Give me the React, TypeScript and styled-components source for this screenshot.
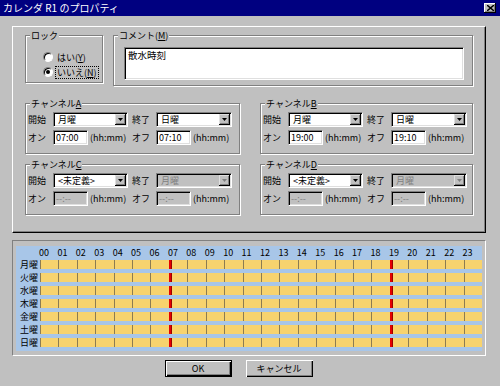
import React from 'react';
import styled, { createGlobalStyle } from 'styled-components';

const FONT = `"Noto Sans CJK JP", "Liberation Sans", sans-serif`;

const GlobalStyle = createGlobalStyle`
  html, body {
    margin: 0;
    padding: 0;
    background: #c0c0c0;
  }
  body {
    font-family: ${FONT};
    font-size: 9px;
    color: #000;
  }
  * {
    box-sizing: border-box;
  }
`;

const sunken = `
  border-top: 1px solid #808080;
  border-left: 1px solid #808080;
  border-right: 1px solid #fff;
  border-bottom: 1px solid #fff;
  box-shadow: inset 1px 1px #000, inset -1px -1px #dfdfdf;
`;

const Window = styled.div`
  width: 500px;
  height: 386px;
  background: #c0c0c0;
  display: flex;
  flex-direction: column;
  overflow: hidden;
`;

const TitleBar = styled.div`
  height: 16px;
  flex: none;
  background: #000080;
  color: #fff;
  display: flex;
  align-items: center;
  justify-content: space-between;
  padding: 0 4px 0 3px;
  font-size: 10px;
  line-height: 16px;
`;

const CloseButton = styled.span`
  width: 12px;
  height: 10px;
  background: #c0c0c0;
  box-shadow: inset -1px -1px #000, inset 1px 1px #fff, inset -2px -2px #808080;
  display: flex;
  align-items: center;
  justify-content: center;
`;

const Body = styled.div`
  padding: 10px 14px 0 12px;
  display: flex;
  flex-direction: column;
`;

const SettingsPanel = styled.div`
  height: 207px;
  border-top: 1px solid #fff;
  border-left: 1px solid #fff;
  border-right: 1px solid #000;
  border-bottom: 1px solid #000;
  box-shadow: inset -1px -1px #808080;
  padding: 3px 12px 0 12px;
`;

const TopRow = styled.div`
  display: flex;
  align-items: flex-start;
  gap: 10px;
`;

const Group = styled.fieldset<{ $width?: number }>`
  margin: 0;
  padding: 0;
  min-width: 0;
  border: 1px solid #808080;
  box-shadow: inset 1px 1px #fff, 1px 1px #fff;
  ${(p) => (p.$width ? `width: ${p.$width}px; flex: none;` : 'flex: 1;')}
`;

const Legend = styled.legend`
  margin-left: 4px;
  padding: 0 1px;
  height: 11px;
  line-height: 11px;
  background: #c0c0c0;
`;

const RadioList = styled.div`
  display: flex;
  flex-direction: column;
  gap: 3px;
  padding: 10px 0 4px 17px;
`;

const RadioRow = styled.label`
  display: flex;
  align-items: center;
  gap: 3px;
  height: 12px;
`;

const RadioCircle = styled.span<{ $checked?: boolean }>`
  width: 10px;
  height: 10px;
  flex: none;
  border-radius: 50%;
  background: #fff;
  border: 1px solid;
  border-color: #808080 #fff #fff #808080;
  box-shadow: inset 1px 1px #000;
  display: flex;
  align-items: center;
  justify-content: center;

  &::after {
    content: '';
    width: 4px;
    height: 4px;
    border-radius: 50%;
    background: #000;
    display: ${(p) => (p.$checked ? 'block' : 'none')};
  }
`;

const RadioText = styled.span<{ $focused?: boolean }>`
  line-height: 11px;
  padding: 0 1px;
  outline: ${(p) => (p.$focused ? '1px dotted #000' : 'none')};
`;

const CommentBody = styled.div`
  padding: 6px 8px 5px 10px;
`;

const CommentBox = styled.div`
  height: 33px;
  background: #fff;
  padding: 2px 3px;
  line-height: 11px;
  font-size: 9.5px;
  ${sunken}
`;

const ChannelGrid = styled.div`
  margin-top: 12px;
  display: grid;
  grid-template-columns: 215px 213px;
  column-gap: 20px;
  row-gap: 5px;
`;

const ChannelBody = styled.div`
  display: grid;
  grid-template-columns: 25px 75px 28px 76px;
  grid-template-rows: 15px 15px;
  row-gap: 3px;
  align-items: center;
  padding: 3px 0 8px 2px;
`;

const FieldLabel = styled.span<{ $gap?: boolean }>`
  line-height: 11px;
  white-space: nowrap;
  padding-left: ${(p) => (p.$gap ? '4px' : '0')};
`;

const Combo = styled.div<{ $disabled?: boolean }>`
  height: 15px;
  display: flex;
  align-items: stretch;
  padding: 1px;
  ${sunken}
  background: ${(p) => (p.$disabled ? '#c0c0c0' : '#fff')};
  color: ${(p) => (p.$disabled ? '#808080' : '#000')};
`;

const ComboText = styled.span`
  flex: 1;
  padding-left: 3px;
  line-height: 11px;
  white-space: nowrap;
  overflow: hidden;
`;

const ComboButton = styled.span`
  width: 11px;
  flex: none;
  background: #c0c0c0;
  box-shadow: inset -1px -1px #000, inset 1px 1px #dfdfdf, inset -2px -2px #808080;
  display: flex;
  align-items: center;
  justify-content: center;
`;

const TimeCell = styled.div`
  display: flex;
  align-items: center;
  gap: 2px;
`;

const TimeInput = styled.div<{ $disabled?: boolean }>`
  width: 35px;
  height: 15px;
  flex: none;
  padding: 1px 2px;
  line-height: 11px;
  ${sunken}
  background: ${(p) => (p.$disabled ? '#c0c0c0' : '#fff')};
  color: ${(p) => (p.$disabled ? '#808080' : '#000')};
`;

const Hint = styled.span`
  line-height: 11px;
  white-space: nowrap;
`;

const TimelinePanel = styled.div`
  margin-top: 7px;
  height: 116px;
  border-top: 1px solid #808080;
  border-left: 1px solid #808080;
  border-right: 1px solid #fff;
  border-bottom: 1px solid #fff;
  padding: 5px 3px 0 3px;
`;

const Timeline = styled.div`
  background: #a8c6e8;
  display: grid;
  grid-template-columns: 24px repeat(24, 1fr);
`;

const Corner = styled.div`
  height: 14px;
`;

const HourLabel = styled.div`
  height: 14px;
  line-height: 14px;
  margin-left: -1px;
`;

const DayLabel = styled.div`
  height: 9px;
  line-height: 9px;
  margin-bottom: 4px;
  text-align: right;
  padding-right: 2px;
  white-space: nowrap;
`;

const Track = styled.div`
  grid-column: 2 / -1;
  height: 9px;
  margin-bottom: 4px;
  position: relative;
  display: grid;
  grid-template-columns: repeat(24, 1fr);
  background: #f7d36e;
`;

const HourCell = styled.div`
  border-left: 1px solid #8c7c52;

  &:last-child {
    border-right: 1px solid #8c7c52;
  }
`;

const Marker = styled.div`
  position: absolute;
  top: 0;
  bottom: 0;
  background: #e40000;
  border-right: 1px solid #900;
`;

const ButtonRow = styled.div`
  margin-top: 4px;
  display: flex;
  justify-content: center;
  gap: 14px;
  padding-right: 21px;
`;

const Button = styled.button<{ $default?: boolean }>`
  width: 67px;
  height: 17px;
  padding: 0;
  font-family: ${FONT};
  font-size: 9px;
  line-height: 11px;
  color: #000;
  background: #c0c0c0;
  border: ${(p) => (p.$default ? '1px solid #000' : 'none')};
  box-shadow: ${(p) =>
    p.$default
      ? 'inset 1px 1px #fff, inset -1px -1px #000, inset -2px -2px #808080'
      : 'inset 1px 1px #fff, inset -1px -1px #000, inset -2px -2px #808080'};
`;

const Arrow = ({ disabled }: { disabled?: boolean }) => (
  <svg width="5" height="3" viewBox="0 0 5 3">
    <polygon points="0,0 5,0 2.5,3" fill={disabled ? '#808080' : '#000'} />
  </svg>
);

interface Channel {
  id: string;
  start: string;
  end: string;
  on: string;
  off: string;
  enabled: boolean;
}

const channels: Channel[] = [
  { id: 'A', start: '月曜', end: '日曜', on: '07:00', off: '07:10', enabled: true },
  { id: 'B', start: '月曜', end: '日曜', on: '19:00', off: '19:10', enabled: true },
  { id: 'C', start: '<未定義>', end: '月曜', on: '--:--', off: '--:--', enabled: false },
  { id: 'D', start: '<未定義>', end: '月曜', on: '--:--', off: '--:--', enabled: false },
];

const days = ['月曜', '火曜', '水曜', '木曜', '金曜', '土曜', '日曜'];
const hours = Array.from({ length: 24 }, (_, i) => String(i).padStart(2, '0'));

const toMinutes = (t: string) => {
  const [h, m] = t.split(':').map(Number);
  return h * 60 + m;
};

function ChannelGroup({ ch }: { ch: Channel }) {
  const off = !ch.enabled;
  return (
    <Group>
      <Legend>
        チャンネル<u>{ch.id}</u>
      </Legend>
      <ChannelBody>
        <FieldLabel>開始</FieldLabel>
        <Combo>
          <ComboText>{ch.start}</ComboText>
          <ComboButton>
            <Arrow />
          </ComboButton>
        </Combo>
        <FieldLabel $gap>終了</FieldLabel>
        <Combo $disabled={off}>
          <ComboText>{ch.end}</ComboText>
          <ComboButton>
            <Arrow disabled={off} />
          </ComboButton>
        </Combo>
        <FieldLabel>オン</FieldLabel>
        <TimeCell>
          <TimeInput $disabled={off}>{ch.on}</TimeInput>
          <Hint>(hh:mm)</Hint>
        </TimeCell>
        <FieldLabel $gap>オフ</FieldLabel>
        <TimeCell>
          <TimeInput $disabled={off}>{ch.off}</TimeInput>
          <Hint>(hh:mm)</Hint>
        </TimeCell>
      </ChannelBody>
    </Group>
  );
}

export default function App() {
  const active = channels.filter((c) => c.enabled);
  return (
    <Window>
      <GlobalStyle />
      <TitleBar>
        <span>カレンダ R1 のプロパティ</span>
        <CloseButton>
          <svg width="7" height="6" viewBox="0 0 7 6">
            <path d="M0 0 L7 6 M7 0 L0 6" stroke="#000" strokeWidth="1.4" />
          </svg>
        </CloseButton>
      </TitleBar>
      <Body>
        <SettingsPanel>
          <TopRow>
            <Group $width={78}>
              <Legend>ロック</Legend>
              <RadioList>
                <RadioRow>
                  <RadioCircle />
                  <RadioText>
                    はい(<u>Y</u>)
                  </RadioText>
                </RadioRow>
                <RadioRow>
                  <RadioCircle $checked />
                  <RadioText $focused>
                    いいえ(<u>N</u>)
                  </RadioText>
                </RadioRow>
              </RadioList>
            </Group>
            <Group>
              <Legend>
                コメント(<u>M</u>)
              </Legend>
              <CommentBody>
                <CommentBox>散水時刻</CommentBox>
              </CommentBody>
            </Group>
          </TopRow>
          <ChannelGrid>
            {channels.map((ch) => (
              <ChannelGroup key={ch.id} ch={ch} />
            ))}
          </ChannelGrid>
        </SettingsPanel>
        <TimelinePanel>
          <Timeline>
            <Corner />
            {hours.map((h) => (
              <HourLabel key={h}>{h}</HourLabel>
            ))}
            {days.map((d) => (
              <React.Fragment key={d}>
                <DayLabel>{d}</DayLabel>
                <Track>
                  {hours.map((h) => (
                    <HourCell key={h} />
                  ))}
                  {active.map((c) => {
                    const s = toMinutes(c.on);
                    const e = toMinutes(c.off);
                    return (
                      <Marker
                        key={c.id}
                        style={{ left: `${(s / 1440) * 100}%`, width: `${((e - s) / 1440) * 100}%` }}
                      />
                    );
                  })}
                </Track>
              </React.Fragment>
            ))}
          </Timeline>
        </TimelinePanel>
        <ButtonRow>
          <Button $default>OK</Button>
          <Button>キャンセル</Button>
        </ButtonRow>
      </Body>
    </Window>
  );
}
